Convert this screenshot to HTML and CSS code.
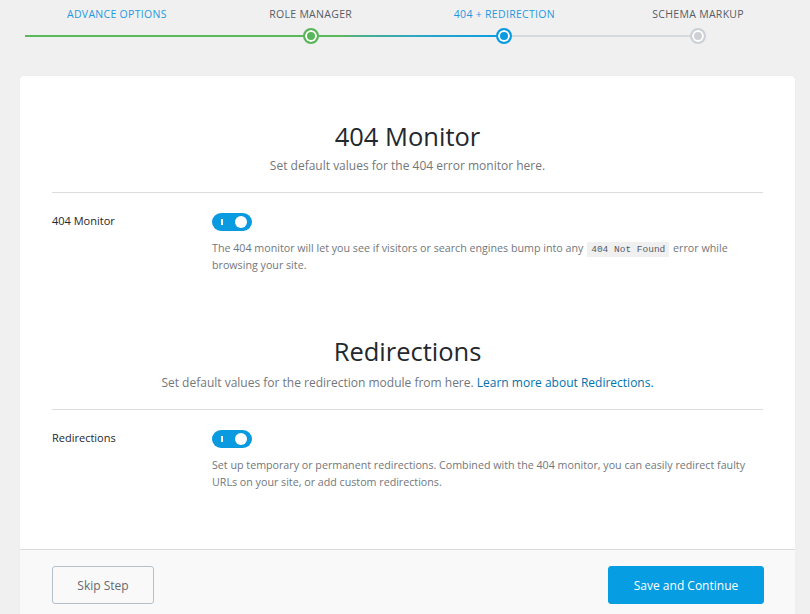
FILE: index.html
```html
<!DOCTYPE html>
<html>
<head>
<meta charset="utf-8">
<link rel="stylesheet" href="styles.css">
</head>
<body>
<div class="page">
  <div class="stepper">
    <div class="track">
      <div class="seg seg-green"></div>
      <div class="seg seg-grad"></div>
      <div class="seg seg-gray"></div>
    </div>
    <div class="step done">
      <span class="step-label">Advance Options</span>
    </div>
    <div class="step done">
      <span class="step-label dark">Role Manager</span>
      <span class="dot dot-green"></span>
    </div>
    <div class="step active">
      <span class="step-label">404 + Redirection</span>
      <span class="dot dot-blue"></span>
    </div>
    <div class="step">
      <span class="step-label dark">Schema Markup</span>
      <span class="dot dot-gray"></span>
    </div>
  </div>

  <div class="card">
    <div class="card-body">
      <section class="block">
        <h1 class="title">404 Monitor</h1>
        <p class="subtitle">Set default values for the 404 error monitor here.</p>
        <hr class="divider">
        <div class="field">
          <div class="field-label">404 Monitor</div>
          <div class="field-control">
            <span class="toggle"><span class="toggle-mark"></span><span class="toggle-knob"></span></span>
            <p class="desc">The 404 monitor will let you see if visitors or search engines bump into any <code class="chip">404 Not Found</code> error while browsing your site.</p>
          </div>
        </div>
      </section>

      <section class="block block-second">
        <h1 class="title">Redirections</h1>
        <p class="subtitle">Set default values for the redirection module from here. <a class="link" href="#">Learn more about Redirections.</a></p>
        <hr class="divider">
        <div class="field">
          <div class="field-label">Redirections</div>
          <div class="field-control">
            <span class="toggle"><span class="toggle-mark"></span><span class="toggle-knob"></span></span>
            <p class="desc">Set up temporary or permanent redirections. Combined with the 404 monitor, you can easily redirect faulty URLs on your site, or add custom redirections.</p>
          </div>
        </div>
      </section>
    </div>
    <div class="card-footer">
      <button class="btn btn-skip">Skip Step</button>
      <button class="btn btn-primary">Save and Continue</button>
    </div>
  </div>
</div>
</body>
</html>
```

FILE: styles.css
```css
* { box-sizing: border-box; }
html, body {
  margin: 0;
  padding: 0;
  background: #f0f0f1;
  font-family: "Open Sans", "Noto Sans", sans-serif;
  color: #3c434a;
}
.page {
  width: 775px;
  margin-left: 20px;
}
.stepper {
  position: relative;
  display: grid;
  grid-template-columns: repeat(4, 1fr);
  height: 76px;
}
.track {
  position: absolute;
  left: 5px;
  top: 35px;
  height: 2px;
  width: 674px;
  display: flex;
}
.seg { height: 2px; }
.seg-green { width: 316px; background: #5cb85c; }
.seg-grad { width: 160px; background: linear-gradient(90deg, #5cb85c 0%, #4caf8a 10%, #2aa6c8 50%, #0c9de0 100%); }
.seg-gray { flex: 1; background: #d6d9dd; }
.step {
  position: relative;
  display: flex;
  flex-direction: column;
  align-items: center;
  padding-top: 7px;
}
.step-label {
  font-size: 10.5px;
  line-height: 14px;
  letter-spacing: 0.3px;
  text-transform: uppercase;
  color: #1e9ae0;
  white-space: nowrap;
}
.step-label.dark { color: #555d66; }
.dot {
  position: relative;
  margin-top: 7px;
  width: 16px;
  height: 16px;
  border-radius: 50%;
  z-index: 1;
}
.dot-green { background: #59b65a; border: 2px solid #59b65a; box-shadow: inset 0 0 0 2px #fff; }
.dot-blue { background: #0a9ae0; border: 2px solid #0a9ae0; box-shadow: inset 0 0 0 2px #fff; }
.dot-gray { background: #cdd0d5; border: 2px solid #cdd0d5; box-shadow: inset 0 0 0 2px #fff; }

.card {
  background: #fff;
  border-radius: 4px;
  box-shadow: 0 0 1px rgba(0,0,0,0.08);
  overflow: hidden;
}
.card-body {
  padding: 43px 32px 58px;
}
.block { display: flex; flex-direction: column; }
.block-second { margin-top: 60px; }
.title {
  margin: 0;
  text-align: center;
  font-size: 25.5px;
  line-height: 34px;
  font-weight: 500;
  color: #23282d;
}
.subtitle {
  margin: 3px 0 0;
  text-align: center;
  font-size: 12px;
  line-height: 20px;
  color: #72777c;
}
.block-second .subtitle { margin-top: 5px; }
.link { color: #0073aa; text-decoration: none; }
.divider {
  margin: 16px 0 0;
  border: 0;
  border-top: 1px solid #dcdcde;
}
.field {
  display: flex;
  padding-top: 20px;
}
.field-label {
  width: 160px;
  font-size: 11px;
  line-height: 16px;
  color: #23282d;
}
.field-control { flex: 1; }
.toggle {
  position: relative;
  display: block;
  width: 40px;
  height: 18px;
  border-radius: 9px;
  background: #0a9ae0;
}
.toggle-mark {
  position: absolute;
  left: 9px;
  top: 6px;
  width: 1.5px;
  height: 6px;
  background: #fff;
}
.toggle-knob {
  position: absolute;
  right: 5px;
  top: 3px;
  width: 12px;
  height: 12px;
  border-radius: 50%;
  background: #fff;
}
.desc {
  margin: 9px 0 0;
  font-size: 10.7px;
  line-height: 17px;
  color: #72777c;
}
.chip {
  display: inline-block;
  font-family: "Liberation Mono", "DejaVu Sans Mono", monospace;
  font-size: 9.5px;
  line-height: 15px;
  background: #f0f0f1;
  color: #555d66;
  padding: 0 4px;
  margin: 0 1px;
}
.card-footer {
  display: flex;
  justify-content: space-between;
  align-items: center;
  background: #f9f9f9;
  border-top: 1px solid #dcdcde;
  padding: 16px 31px 30px 32px;
}
.btn {
  font-family: "Open Sans", "Noto Sans", sans-serif;
  font-size: 12px;
  height: 38px;
  border-radius: 3px;
  cursor: pointer;
}
.btn-skip {
  width: 102px;
  background: #f9f9f9;
  border: 1px solid #b5bfc9;
  color: #646970;
}
.btn-primary {
  width: 156px;
  background: #069de3;
  border: 1px solid #069de3;
  color: #fff;
}
```
